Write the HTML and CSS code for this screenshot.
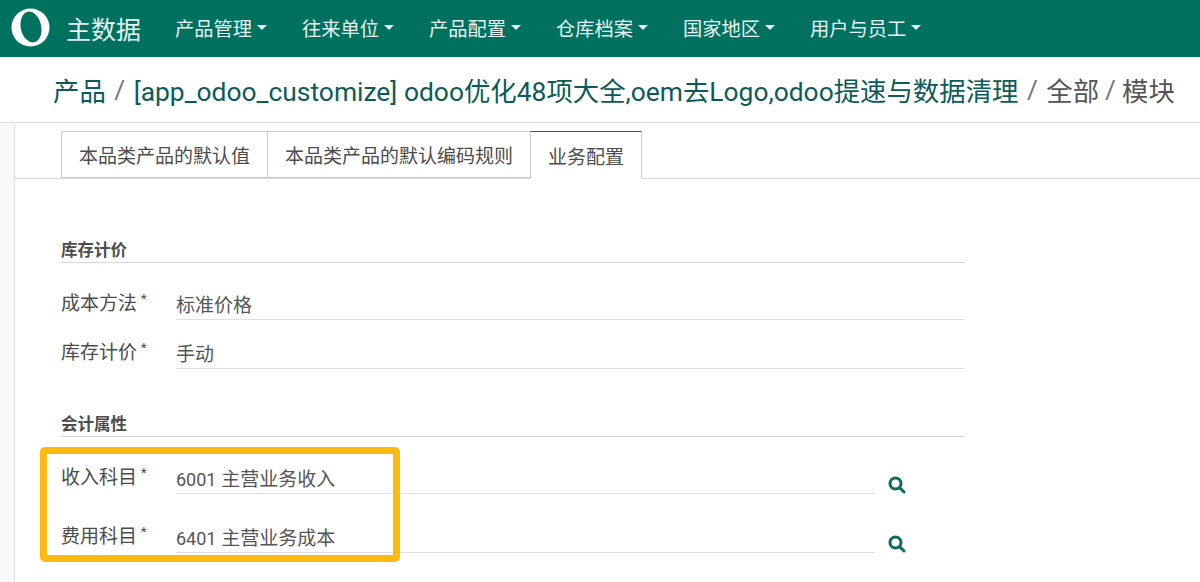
FILE: index.html
```html
<!DOCTYPE html>
<html lang="zh">
<head>
    <meta charset="UTF-8">
    <meta name="viewport" content="width=device-width, initial-scale=1.0">
    <title>主数据</title>
    <link rel="stylesheet" href="styles.css">
</head>
<body>
    <header class="topbar">
        <svg class="logo" viewBox="0 0 40 40">
            <circle cx="20" cy="20" r="19.500" fill="#fff"/>
            <ellipse cx="20.500" cy="19.500" rx="10.500" ry="16" fill="#00705f" transform="rotate(-12 20.500 19.500)"/>
        </svg>
        <span class="brand">主数据</span>
        <nav class="menu">
            <a>产品管理<i class="caret"></i></a>
            <a>往来单位<i class="caret"></i></a>
            <a>产品配置<i class="caret"></i></a>
            <a>仓库档案<i class="caret"></i></a>
            <a>国家地区<i class="caret"></i></a>
            <a>用户与员工<i class="caret"></i></a>
        </nav>
    </header>

    <div class="crumbs">
        <a>产品</a><span class="sep">/</span><a>[app_odoo_customize] odoo优化48项大全,oem去Logo,odoo提速与数据清理</a><span class="sep">/</span><span>全部</span><span class="sep tight">/</span><span>模块</span>
    </div>

    <main class="sheet">
        <ul class="tabs">
            <li>本品类产品的默认值</li>
            <li>本品类产品的默认编码规则</li>
            <li class="active">业务配置</li>
        </ul>

        <div class="pane">
            <section class="group first">
                <h3>库存计价</h3>
                <div class="row">
                    <label>成本方法<sup>*</sup></label>
                    <div class="value">标准价格</div>
                </div>
                <div class="row">
                    <label>库存计价<sup>*</sup></label>
                    <div class="value">手动</div>
                </div>
            </section>

            <section class="group second">
                <h3>会计属性</h3>
                <div class="marked">
                    <div class="row wide">
                        <label>收入科目<sup>*</sup></label>
                        <div class="value"><span class="code">6001</span> 主营业务收入</div>
                        <svg class="search" viewBox="0 0 18 18"><circle cx="7.500" cy="7.500" r="5.500"/><path d="M11.500 11.500L16 16"/></svg>
                    </div>
                    <div class="row wide">
                        <label>费用科目<sup>*</sup></label>
                        <div class="value"><span class="code">6401</span> 主营业务成本</div>
                        <svg class="search" viewBox="0 0 18 18"><circle cx="7.500" cy="7.500" r="5.500"/><path d="M11.500 11.500L16 16"/></svg>
                    </div>
                    <div class="highlight"></div>
                </div>
            </section>
        </div>
    </main>
</body>
</html>
```

FILE: styles.css
```css
html, body {
    margin: 0;
    padding: 0;
    height: 582px;
    overflow: hidden;
}

body {
    font-family: Roboto, "Noto Sans CJK SC", sans-serif;
    background: #ffffff;
    color: #4c4c4c;
}

.topbar {
    display: flex;
    align-items: center;
    height: 55px;
    padding-bottom: 2px;
    background: #00705f;
    color: #ffffff;
}

.logo {
    width: 39px;
    height: 39px;
    margin-left: 11px;
}

.brand {
    margin-left: 16px;
    font-size: 25px;
    color: #e6f2ef;
}

.menu {
    display: flex;
    margin-left: 34px;
    gap: 35px;
    font-size: 19.250px;
    color: #e6f2ef;
}

.menu a {
    display: flex;
    align-items: center;
}

.caret {
    width: 0;
    height: 0;
    margin-left: 5px;
    border-top: 5px solid #e6f2ef;
    border-left: 5px solid transparent;
    border-right: 5px solid transparent;
}

.crumbs {
    display: flex;
    align-items: center;
    height: 66px;
    padding-left: 53px;
    font-size: 26.400px;
    white-space: nowrap;
    color: #555555;
    border-bottom: 1px solid #dcdcdc;
    box-sizing: border-box;
}

.crumbs a {
    color: #0b5c58;
}

.sep {
    margin: 0 8.500px;
    color: #777777;
}

.sep.tight {
    margin: 0 6px;
}

.sheet {
    margin-left: 14px;
    border-left: 1px solid #dcdcdc;
    height: 459px;
    background: #ffffff;
}

body::before {
    content: "";
    position: absolute;
    top: 123px;
    left: 0;
    width: 14px;
    height: 459px;
    background: #f8f8fa;
}

.tabs {
    display: flex;
    margin: 0;
    padding: 8px 0 0 46px;
    list-style: none;
    height: 47px;
    border-bottom: 1px solid #d8d8d8;
    font-size: 19px;
}

.tabs li {
    display: flex;
    align-items: center;
    padding: 0 17px;
    height: 45px;
    border: 1px solid #cccccc;
    margin-right: -1px;
    color: #4c4c4c;
}

.tabs .active {
    border-top-color: #00705f;
    border-bottom-color: #ffffff;
    height: 46px;
}

.pane {
    padding-left: 46px;
}

.group {
    width: 904px;
}

.group.first {
    padding-top: 58px;
}

.group.second {
    padding-top: 42px;
}

.group h3 {
    margin: 0;
    height: 25px;
    font-size: 16.500px;
    line-height: 28px;
    font-weight: 700;
    color: #4c4c4c;
    border-bottom: 1px solid #d8d8d8;
}

.row {
    display: flex;
    align-items: flex-end;
    height: 49px;
}

.first h3 + .row {
    height: 57px;
}

.row label {
    width: 115px;
    height: 30px;
    line-height: 34px;
    padding-bottom: 3px;
    font-size: 19px;
    color: #4c4c4c;
}

.row sup {
    margin-left: 4px;
    font-size: 13px;
    line-height: 0;
}

.value {
    flex: 1;
    height: 30px;
    line-height: 34px;
    font-size: 19px;
    color: #555555;
    border-bottom: 1px solid #dfdfdf;
}

.code {
    font-size: 18px;
}

.marked {
    position: relative;
}

.marked .row {
    height: 59px;
}

.marked .row:first-child {
    height: 57px;
}

.row.wide .value {
    flex: none;
    width: 699px;
}

.search {
    width: 18px;
    height: 18px;
    margin: 0 0 0 13px;
    fill: none;
    stroke: #0b6b5e;
    stroke-width: 3;
    stroke-linecap: round;
}

.highlight {
    position: absolute;
    top: 10px;
    left: -21px;
    width: 346px;
    height: 101px;
    border: 7px solid #fdbb11;
    border-radius: 5px;
}
```
